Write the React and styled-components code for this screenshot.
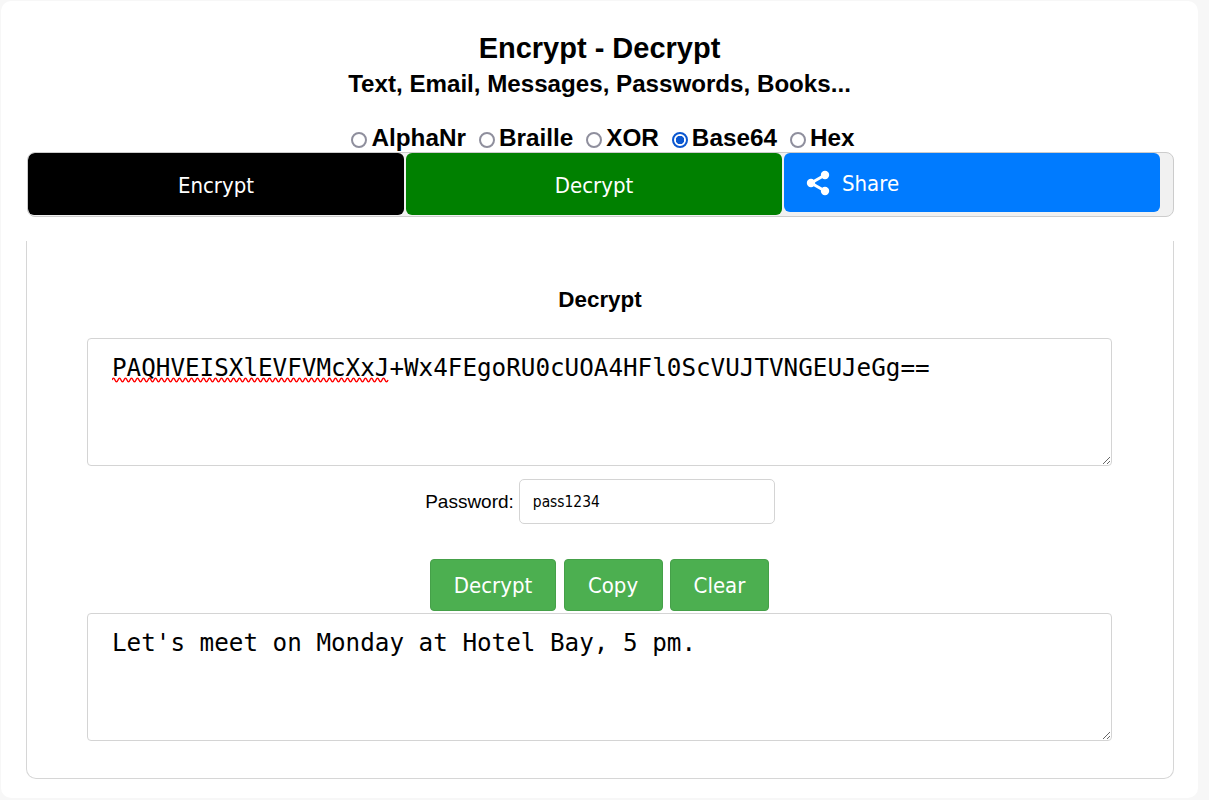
import React from 'react'
import styled, { createGlobalStyle } from 'styled-components'

const GlobalStyle = createGlobalStyle`
  html, body {
    margin: 0;
    padding: 0;
    background: #f7f7f7;
    font-family: "Liberation Sans", Arial, sans-serif;
  }
`
const Page = styled.div`
  width: 1209px;
  height: 800px;
  overflow: hidden;
  padding: 1px 0 0 1px;
  box-sizing: border-box;
`
const Card = styled.div`
  width: 1197px;
  height: 797px;
  box-sizing: border-box;
  background: #fff;
  border-radius: 10px;
  padding: 29px 25px 0;
`
const Title = styled.h1`
  margin: 0;
  text-align: center;
  font-size: 29px;
  line-height: 36px;
  font-weight: 700;
  color: #000;
`
const Subtitle = styled.h2`
  margin: 0;
  text-align: center;
  font-size: 24.15px;
  line-height: 36px;
  font-weight: 700;
  color: #000;
`
const Modes = styled.div`
  display: flex;
  justify-content: center;
  align-items: center;
  margin-top: 22px;
  padding-left: 7px;
  height: 28px;
  gap: 13px;
`
const ModeLabel = styled.label`
  display: flex;
  align-items: center;
  font-size: 24.3px;
  line-height: 28px;
  font-weight: 700;
  color: #000;
`
const Radio = styled.input`
  appearance: none;
  width: 16px;
  height: 16px;
  box-sizing: border-box;
  margin: 4px 4px 0 0;
  border: 2px solid #8f8f9d;
  border-radius: 50%;
  background: #fff;

  &:checked {
    border-color: #0b57d0;
    background: radial-gradient(circle, #0b57d0 0 4px, #fff 4.5px);
  }
`
const Tabs = styled.div`
  display: flex;
  width: 1147px;
  height: 65px;
  box-sizing: border-box;
  margin: 0 0 0 1px;
  background: #f1f1f1;
  border: 1px solid #ccc;
  border-radius: 8px;
  overflow: hidden;
`
const Tab = styled.button`
  width: 376px;
  height: ${p => p.$short ? '59px' : '62px'};
  margin-right: 2px;
  padding: ${p => p.$short ? '1px 0 0 22px' : '3px 0 0'};
  border: none;
  border-radius: 6px;
  background: ${p => p.$bg};
  color: #fff;
  font-family: "DejaVu Sans Condensed", "DejaVu Sans", sans-serif;
  font-size: 22px;
  display: flex;
  align-items: center;
  justify-content: ${p => p.$short ? 'flex-start' : 'center'};
  gap: 12px;
`
const Panel = styled.div`
  position: relative;
  width: 1148px;
  height: 538px;
  box-sizing: border-box;
  margin-top: 24px;
  border: 1px solid #d6d6d6;
  border-top: none;
  border-radius: 0 0 10px 10px;
  display: flex;
  flex-direction: column;
  align-items: center;
`
const PanelTitle = styled.h3`
  margin: 46px 0 0;
  font-size: 22.4px;
  line-height: 26px;
  font-weight: 700;
  color: #000;
`
const TextBox = styled.textarea`
  display: block;
  width: 1025px;
  height: 128px;
  box-sizing: border-box;
  flex: none;
  margin: ${p => p.$top} 1px 0 0;
  padding: 11px 24px;
  border: 1px solid #d4d4d4;
  border-radius: 4px;
  outline: none;
  background: #fff;
  color: #000;
  font-family: "DejaVu Sans Mono", monospace;
  font-size: 24.25px;
  line-height: 36px;
`
const Squiggle = styled.svg`
  position: absolute;
  left: 85px;
  top: 136px;
`
const PasswordRow = styled.div`
  display: flex;
  align-items: center;
  gap: 5px;
  margin-top: 13px;
  font-size: 19px;
  color: #000;
`
const PasswordInput = styled.input`
  width: 256px;
  height: 45px;
  box-sizing: border-box;
  padding: 0 13px;
  border: 1px solid #d4d4d4;
  border-radius: 5px;
  outline: none;
  color: #000;
  font-family: "DejaVu Sans Condensed", "DejaVu Sans", sans-serif;
  font-size: 15.4px;
`
const Buttons = styled.div`
  display: flex;
  gap: 7.5px;
  margin: 35px 1px 0 0;
`
const ActionButton = styled.button`
  width: ${p => p.$w}px;
  height: 52px;
  padding: 0;
  border: 1px solid #45a049;
  border-radius: 4px;
  background: #4caf50;
  color: #fff;
  font-family: "DejaVu Sans Condensed", "DejaVu Sans", sans-serif;
  font-size: 22px;
`

const squigglePath = () => {
  let d = 'M0 3'
  for (let x = 0; x < 276; x += 6) {
    d += ` Q${x + 1.5} -0.5 ${x + 3} 3 T${x + 6} 3`
  }
  return d
}

const ShareIcon = () => (
  <svg width="24" height="26" viewBox="0 0 24 26" fill="#fff">
    <circle cx="19" cy="5" r="4.2" />
    <circle cx="5" cy="13" r="4.2" />
    <circle cx="19" cy="21" r="4.2" />
    <path d="M5 13 19 5M5 13l14 8" stroke="#fff" strokeWidth="3" fill="none" />
  </svg>
)

const modes = ['AlphaNr', 'Braille', 'XOR', 'Base64', 'Hex']

export default function App() {
  return (
    <Page>
      <GlobalStyle />
      <Card>
        <Title>Encrypt - Decrypt</Title>
        <Subtitle>Text, Email, Messages, Passwords, Books...</Subtitle>
        <Modes>
          {modes.map(m => (
            <ModeLabel key={m}>
              <Radio type="radio" name="mode" defaultChecked={m === 'Base64'} />
              {m}
            </ModeLabel>
          ))}
        </Modes>
        <Tabs>
          <Tab $bg="#000">Encrypt</Tab>
          <Tab $bg="#008000">Decrypt</Tab>
          <Tab $bg="#007bff" $short><ShareIcon />Share</Tab>
        </Tabs>
        <Panel>
          <PanelTitle>Decrypt</PanelTitle>
          <TextBox
            $top="25px"
            spellCheck={false}
            defaultValue="PAQHVEISXlEVFVMcXxJ+Wx4FEgoRU0cUOA4HFl0ScVUJTVNGEUJeGg=="
          />
          <Squiggle width="278" height="6" viewBox="0 0 278 6">
            <path d={squigglePath()} fill="none" stroke="#f00" strokeWidth="1.4" />
          </Squiggle>
          <PasswordRow>
            Password:
            <PasswordInput type="text" defaultValue="pass1234" />
          </PasswordRow>
          <Buttons>
            <ActionButton $w={126}>Decrypt</ActionButton>
            <ActionButton $w={99}>Copy</ActionButton>
            <ActionButton $w={99}>Clear</ActionButton>
          </Buttons>
          <TextBox
            $top="2px"
            spellCheck={false}
            defaultValue="Let's meet on Monday at Hotel Bay, 5 pm."
          />
        </Panel>
      </Card>
    </Page>
  )
}
